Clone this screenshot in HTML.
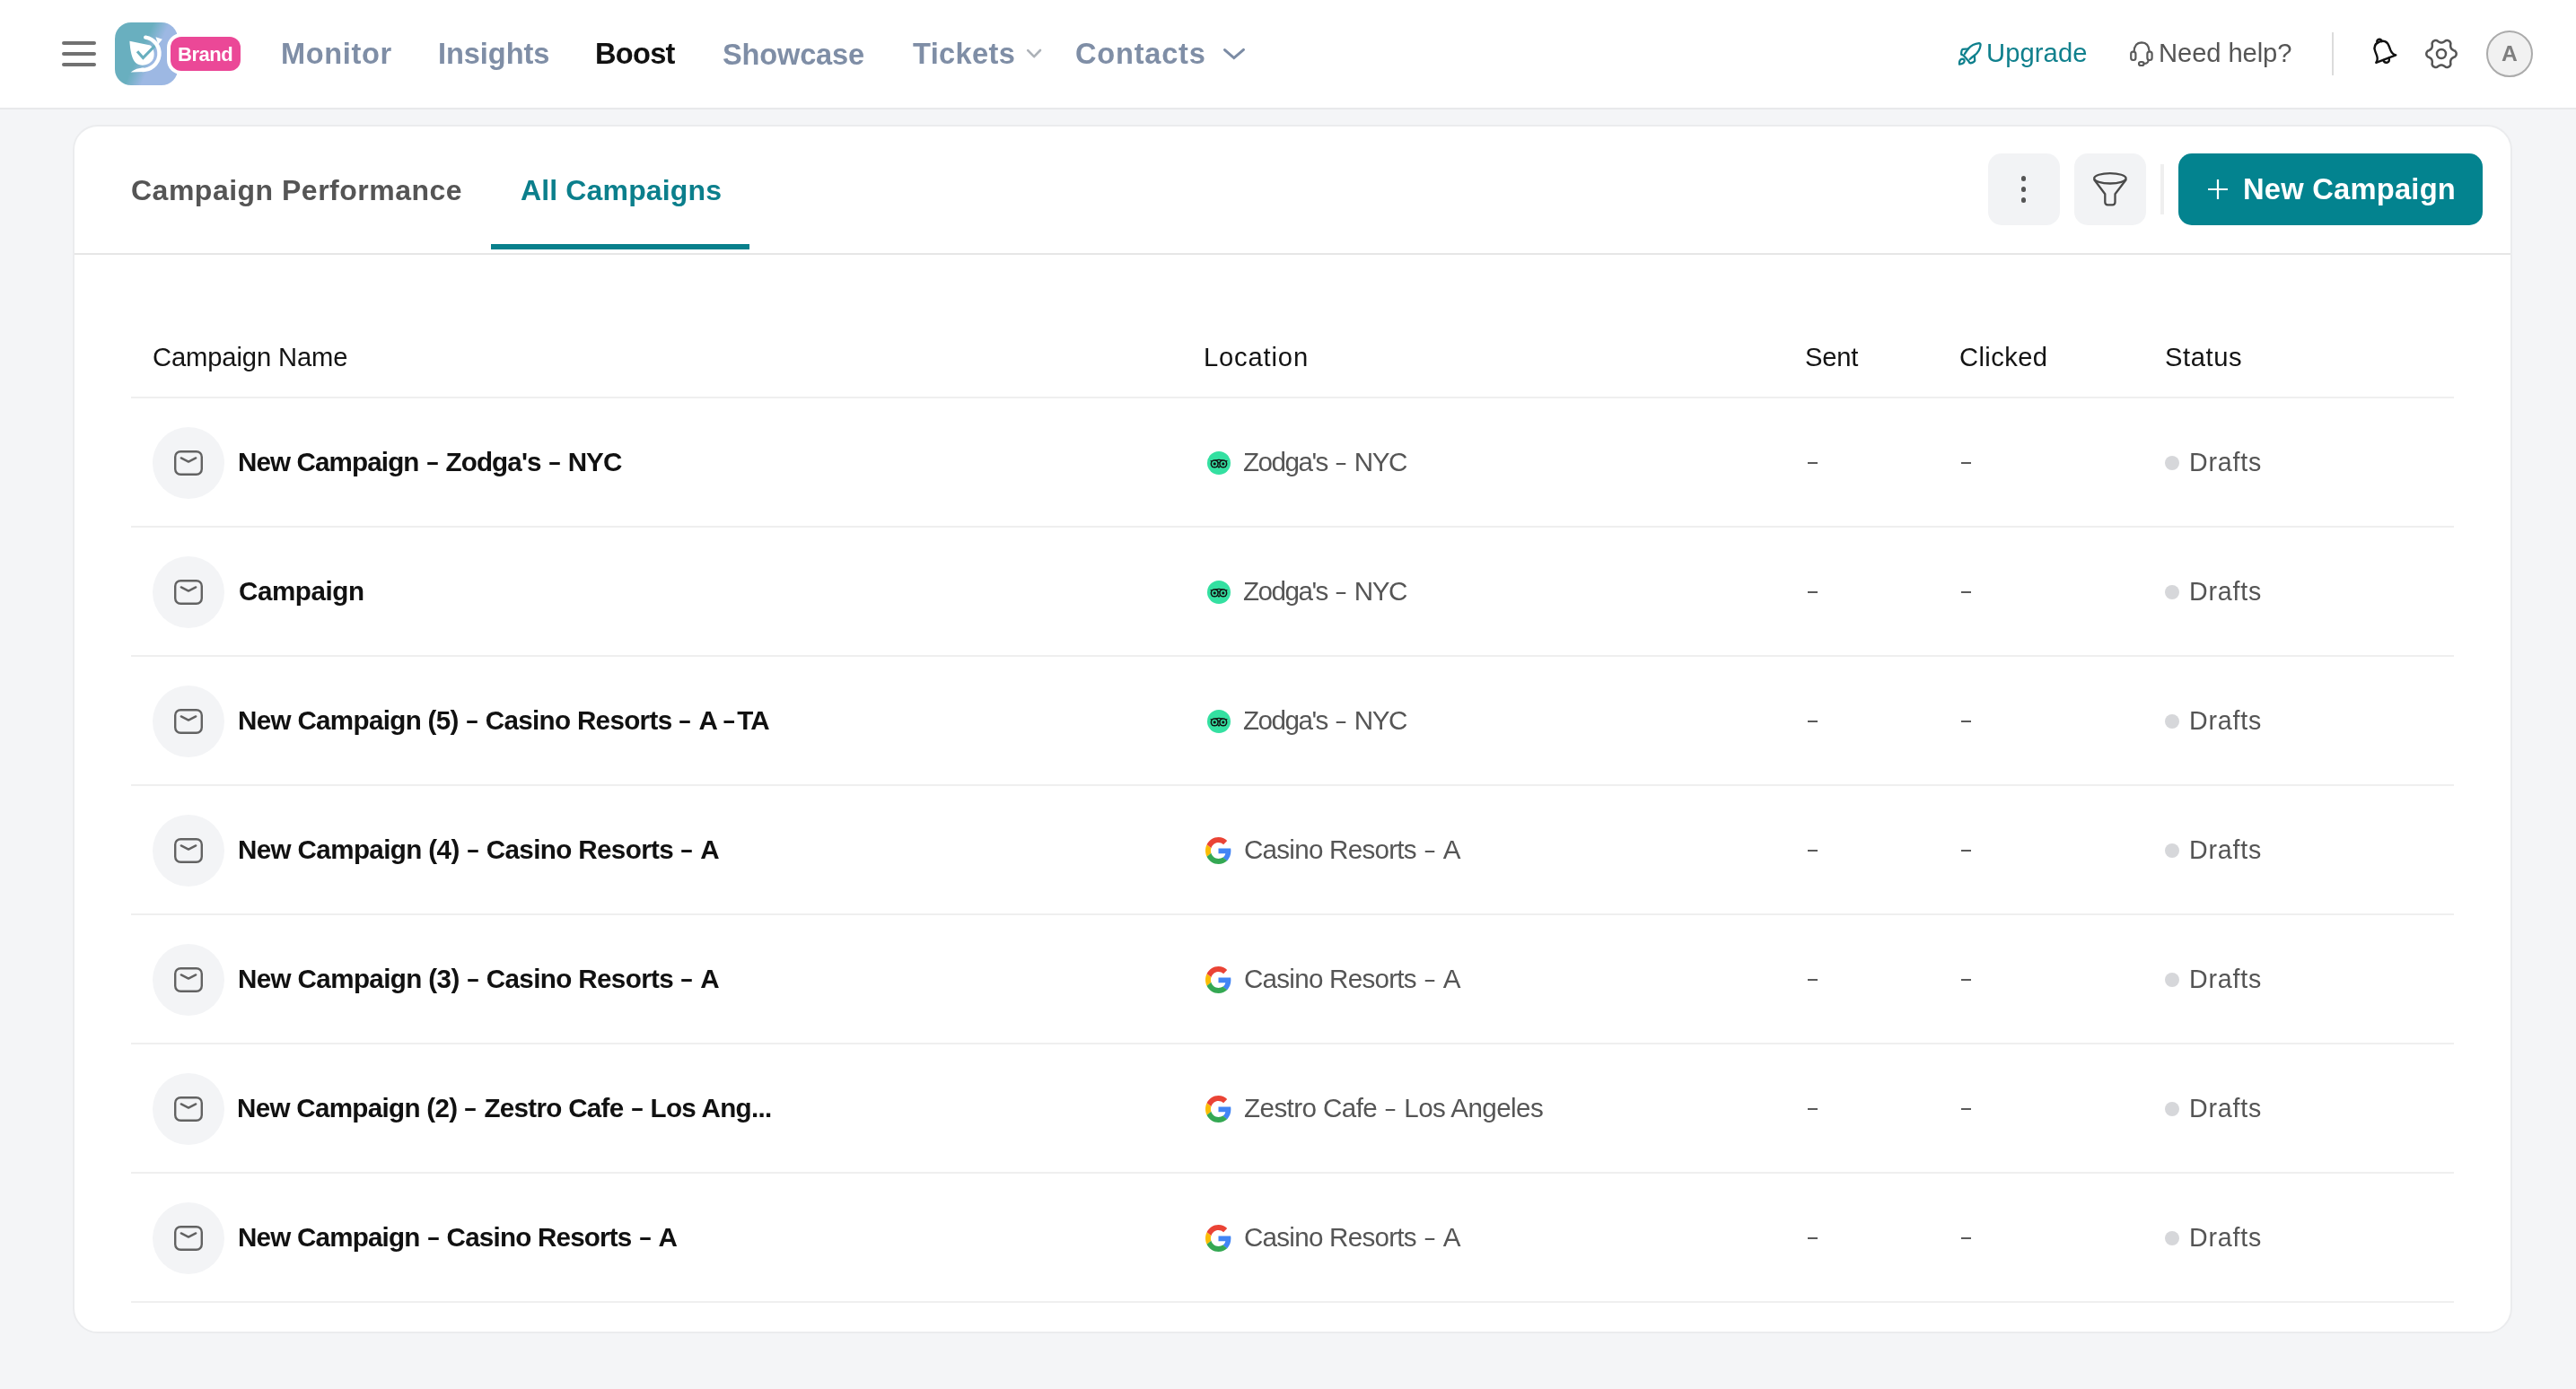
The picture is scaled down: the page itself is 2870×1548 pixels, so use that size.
<!DOCTYPE html>
<html><head><meta charset="utf-8"><title>All Campaigns</title>
<style>
*{box-sizing:border-box;margin:0;padding:0}
html,body{width:2870px;height:1548px;overflow:hidden}
body{background:#F4F5F7;font-family:"Liberation Sans",sans-serif;position:relative}
.a{position:absolute;white-space:nowrap;line-height:1}
.t{will-change:transform}
.bar{position:absolute;left:69px;width:38px;height:4px;border-radius:2px;background:#717171}
.hl{position:absolute;left:146px;width:2588px;height:2px;background:#EFEFEF}
.circ{position:absolute;left:170px;width:80px;height:80px;border-radius:40px;background:#F3F4F6}
.dash{position:absolute;width:11px;height:2px;background:#5A5A5A}
.db,.dr,.db1{display:inline-block;letter-spacing:0;text-align:center}
.db{width:30px;transform:scaleX(.79)}
.db1{width:22px;transform:scaleX(.79);text-align:right}
.dr{width:30px;transform:scaleX(.64)}
.dot{position:absolute;left:2412px;width:16px;height:16px;border-radius:8px;background:#D6D7DA}
</style></head>
<body>
<div class="a" style="left:0;top:0;width:2870px;height:122px;background:#fff;border-bottom:2px solid #E8E9EB"></div>
<div class="bar" style="top:46px"></div>
<div class="bar" style="top:58px"></div>
<div class="bar" style="top:70px"></div>
<div class="a" style="left:128px;top:25px;width:70px;height:70px;border-radius:18px;background:linear-gradient(115deg,#69AFBF 0%,#69AFBF 42%,#9DB8E3 60%,#9DB8E3 100%)"></div>
<svg class="a" style="left:136px;top:32px" width="56" height="56" viewBox="0 0 56 56"><path d="M8.4 13.7L31.5 18.4C35.8 22 37.2 30 33.6 35.6C30 40.8 20.5 42.6 15.2 38C10.8 33.8 9 24 8.4 13.7Z" fill="#fff"/><path d="M17 25.3L23.4 32.5L37.6 18" fill="none" stroke="#69AFBF" stroke-width="3.2"/><path d="M26.2 9.6A18.3 18.3 0 0 1 21.8 45.9" fill="none" stroke="#fff" stroke-width="4.4" stroke-linecap="round"/><path d="M24 43.6Q15.5 43.8 9.6 48.6Q16 48.3 24 48.1Z" fill="#fff"/><path d="M37.5 9.2L44.8 11.7L40.3 17.6Z" fill="#fff"/></svg>
<div class="a" style="left:186px;top:36.5px;width:86px;height:46.5px;border-radius:16px;background:#fff"></div>
<div class="a" style="left:190px;top:40.5px;width:78px;height:38.5px;border-radius:12px;background:#EB4897"></div>
<div class="a t" id="brand" style="left:198.34px;top:50.08px;font-size:22px;font-weight:700;color:#fff;letter-spacing:-0.450px">Brand</div>
<div class="a t" id="monitor" style="left:313.00px;top:44.20px;font-size:32.6px;font-weight:700;color:#7F8EA6;letter-spacing:0.630px">Monitor</div>
<div class="a t" id="insights" style="left:487.78px;top:44.20px;font-size:32.6px;font-weight:700;color:#7F8EA6;letter-spacing:-0.077px">Insights</div>
<div class="a t" id="boost" style="left:663.05px;top:44.20px;font-size:32.6px;font-weight:700;color:#111;letter-spacing:-0.720px">Boost</div>
<div class="a t" id="showcase" style="left:805.34px;top:45.20px;font-size:32.6px;font-weight:700;color:#7F8EA6;letter-spacing:-0.180px">Showcase</div>
<div class="a t" id="tickets" style="left:1016.75px;top:44.20px;font-size:32.6px;font-weight:700;color:#7F8EA6;letter-spacing:0.375px">Tickets</div>
<div class="a t" id="contacts" style="left:1197.90px;top:44.20px;font-size:32.6px;font-weight:700;color:#7F8EA6;letter-spacing:0.771px">Contacts</div>
<svg class="a" style="left:1140px;top:50px" width="24" height="20" viewBox="0 0 24 20" fill="none" stroke="#ADB2B8" stroke-width="2.6" stroke-linecap="round" stroke-linejoin="round"><path d="M5.2 6.2L12.1 13.2L19 6"/></svg>
<svg class="a" style="left:1360px;top:50px" width="30" height="20" viewBox="0 0 30 20" fill="none" stroke="#7B8BA4" stroke-width="3" stroke-linecap="round" stroke-linejoin="miter"><path d="M4.5 5.6L14.8 14.6L25.5 5.4"/></svg>
<svg class="a" style="left:2175px;top:38px" width="40" height="40" viewBox="0 0 40 40" fill="none" stroke="#0F808D" stroke-width="2.3" stroke-linejoin="round" stroke-linecap="round"><path d="M12.6 23.8L10.2 22.6Q10 18 11.6 16.8L18 16.3Q22.5 11 30 10.2Q31.8 10.6 31.5 12.6Q30.8 19 24.8 23.8L25.2 29.6Q24.8 31.2 20.3 32.4Q19 32.2 18.6 30.6Z"/><path d="M13.9 22.2Q15.5 19.6 18 16.3"/><path d="M19.6 28Q22 25.6 24.8 23.8"/><path d="M8 33.6Q7.6 28.4 11.2 27.6Q13.8 27.8 13.6 30.2Q12.8 33.2 8 33.6Z"/></svg>
<div class="a t" id="upgrade" style="left:2213.00px;top:44.98px;font-size:29.2px;font-weight:400;color:#10808D;letter-spacing:0.090px">Upgrade</div>
<svg class="a" style="left:2365px;top:38px" width="40" height="40" viewBox="0 0 40 40" fill="none" stroke="#5A5A5A" stroke-width="2.2" stroke-linejoin="round" stroke-linecap="round"><path d="M12.6 19.5Q13 9.6 21 9.4Q29 9.6 29.6 19"/><rect x="9.2" y="19.6" width="5.2" height="9.4" rx="2.4"/><rect x="27.4" y="19.6" width="5.2" height="9.4" rx="2.4"/><path d="M28.6 29.2Q28.4 32.8 23.4 33"/><rect x="18" y="31" width="5.6" height="4" rx="2"/></svg>
<div class="a t" id="needhelp" style="left:2405.05px;top:44.98px;font-size:29.2px;font-weight:400;color:#555;letter-spacing:-0.090px">Need help?</div>
<div class="a" style="left:2598px;top:36px;width:2px;height:48px;background:#DCDCDC"></div>
<svg class="a" style="left:2635.5px;top:39px" width="38" height="40" viewBox="0 0 38 40" fill="none" stroke="#111" stroke-width="2.4" stroke-linejoin="round" stroke-linecap="round"><g transform="rotate(-21 19 18)"><path d="M7.2 27.2Q10.6 25 10.8 20V15Q10.8 7 19 6.8Q27.2 7 27.2 15V20Q27.4 25 30.8 27.2Z"/><path d="M16.3 7.4Q16.3 4 19 4Q21.7 4 21.7 7.4"/><path d="M15.6 27.4Q15.8 31.4 19 31.4Q22.2 31.4 22.4 27.4"/></g></svg>
<svg class="a" style="left:2700px;top:40px" width="40" height="40" viewBox="0 0 40 40" fill="none" stroke="#555" stroke-width="2.5" stroke-linejoin="round"><polygon points="36.70,20.00 36.53,21.16 36.03,22.25 35.18,23.23 33.62,23.91 32.50,24.55 31.68,25.20 31.07,25.88 30.63,26.64 30.35,27.52 30.19,28.55 30.19,29.84 30.39,31.54 29.96,32.75 29.27,33.74 28.35,34.46 27.26,34.89 26.06,35.01 24.80,34.76 23.43,33.75 22.31,33.11 21.34,32.72 20.44,32.52 19.56,32.52 18.66,32.72 17.69,33.11 16.57,33.75 15.20,34.76 13.94,35.01 12.74,34.89 11.65,34.46 10.73,33.74 10.04,32.75 9.61,31.54 9.81,29.84 9.81,28.55 9.65,27.52 9.37,26.64 8.93,25.88 8.32,25.20 7.50,24.55 6.38,23.91 4.82,23.23 3.97,22.25 3.47,21.16 3.30,20.00 3.47,18.84 3.97,17.75 4.82,16.77 6.38,16.09 7.50,15.45 8.32,14.80 8.93,14.12 9.37,13.36 9.65,12.48 9.81,11.45 9.81,10.16 9.61,8.46 10.04,7.25 10.73,6.26 11.65,5.54 12.74,5.11 13.94,4.99 15.20,5.24 16.57,6.25 17.69,6.89 18.66,7.28 19.56,7.48 20.44,7.48 21.34,7.28 22.31,6.89 23.43,6.25 24.80,5.24 26.06,4.99 27.26,5.11 28.35,5.54 29.27,6.26 29.96,7.25 30.39,8.46 30.19,10.16 30.19,11.45 30.35,12.48 30.63,13.36 31.07,14.12 31.68,14.80 32.50,15.45 33.62,16.09 35.18,16.77 36.03,17.75 36.53,18.84 36.70,20.00"/><circle cx="20" cy="20" r="5"/></svg>
<div class="a" style="left:2770px;top:34px;width:52px;height:52px;border-radius:26px;background:#F1F1F1;border:2px solid #ABABAB"></div>
<div class="a t" id="avatarA" style="left:2786.90px;top:48.19px;font-size:24.7px;font-weight:700;color:#7E7E7E;letter-spacing:-3.870px">A</div>
<div class="a" style="left:81px;top:139px;width:2718px;height:1347px;background:#fff;border:2px solid #EBECEE;border-radius:28px"></div>
<div class="a t" id="campperf" style="left:146.29px;top:195.91px;font-size:32px;font-weight:700;color:#555;letter-spacing:0.493px">Campaign Performance</div>
<div class="a t" id="allcamp" style="left:579.85px;top:195.91px;font-size:32px;font-weight:700;color:#0B7F8C;letter-spacing:0.143px">All Campaigns</div>
<div class="a" style="left:547px;top:272px;width:288px;height:6px;background:#08808C"></div>
<div class="a" style="left:83px;top:282px;width:2714px;height:2px;background:#E6E6E6"></div>
<div class="a" style="left:2215px;top:171px;width:80px;height:80px;border-radius:15px;background:#F2F3F5"></div>
<div class="a" style="left:2252px;top:196.4px;width:5.2px;height:5.2px;border-radius:3px;background:#555"></div>
<div class="a" style="left:2252px;top:208.4px;width:5.2px;height:5.2px;border-radius:3px;background:#555"></div>
<div class="a" style="left:2252px;top:220.4px;width:5.2px;height:5.2px;border-radius:3px;background:#555"></div>
<div class="a" style="left:2311px;top:171px;width:80px;height:80px;border-radius:15px;background:#F2F3F5"></div>
<svg class="a" style="left:2320px;top:180px" width="60" height="60" viewBox="0 0 60 60" fill="none" stroke="#4A4A4A" stroke-width="2.3" stroke-linejoin="round" stroke-linecap="round"><ellipse cx="30.9" cy="18.8" rx="17.7" ry="5.7"/><path d="M13.4 20.5L25.3 36.3V45.3Q25.3 48.3 28.3 48.3H33.5Q36.5 48.3 36.5 45.3V36.3L48.5 20.5"/></svg>
<div class="a" style="left:2407px;top:183px;width:4px;height:56px;background:#EFEFEF"></div>
<div class="a" style="left:2427px;top:171px;width:339px;height:80px;border-radius:15px;background:#03838F"></div>
<svg class="a" style="left:2458px;top:198px" width="26" height="26" viewBox="0 0 26 26" stroke="#fff" stroke-width="2.2"><path d="M13 2V24M2 13H24"/></svg>
<div class="a t" id="newcamp" style="left:2498.78px;top:195.42px;font-size:32.7px;font-weight:700;color:#fff;letter-spacing:0.229px">New Campaign</div>
<div class="a t" id="th_name" style="left:169.90px;top:383.68px;font-size:29.2px;font-weight:400;color:#141414;letter-spacing:-0.128px">Campaign Name</div>
<div class="a t" id="th_loc" style="left:1340.61px;top:383.68px;font-size:29.2px;font-weight:400;color:#141414;letter-spacing:0.823px">Location</div>
<div class="a t" id="th_sent" style="left:2011.34px;top:383.68px;font-size:29.2px;font-weight:400;color:#141414;letter-spacing:-0.240px">Sent</div>
<div class="a t" id="th_clicked" style="left:2182.68px;top:383.68px;font-size:29.2px;font-weight:400;color:#141414;letter-spacing:0.390px">Clicked</div>
<div class="a t" id="th_status" style="left:2411.73px;top:383.68px;font-size:29.2px;font-weight:400;color:#141414;letter-spacing:0.576px">Status</div>
<div class="hl" style="top:442px"></div>
<div class="circ" style="top:476px"></div>
<svg class="a" style="left:194px;top:502px" width="32" height="28" viewBox="0 0 32 28" fill="none" stroke="#626262" stroke-width="2.4" stroke-linecap="round" stroke-linejoin="round"><rect x="1.2" y="1.2" width="29.6" height="25.6" rx="6"/><path d="M7.8 8.4L16 12.6L24.2 8.4"/></svg>
<div class="a t" id="nm0" style="left:265.00px;top:500.34px;font-size:29.6px;font-weight:700;color:#111;letter-spacing:-0.883px">New Campaign<span class="db">–</span>Zodga's<span class="db">–</span>NYC</div>
<svg class="a" style="left:1345px;top:503px" width="26" height="26" viewBox="0 0 26 26"><circle cx="13" cy="13" r="13" fill="#34E0A1"/><path d="M3.2 10.3H7Q13 7 19 10.3H22.8L20.5 13.2H5.5Z" fill="#111"/><circle cx="8.2" cy="13.9" r="4.6" fill="#111"/><circle cx="17.8" cy="13.9" r="4.6" fill="#111"/><path d="M11 16.6L13 19L15 16.6Z" fill="#111"/><circle cx="8.2" cy="13.9" r="3.1" fill="#34E0A1"/><circle cx="17.8" cy="13.9" r="3.1" fill="#34E0A1"/><circle cx="8.2" cy="13.9" r="1.6" fill="#111"/><circle cx="17.8" cy="13.9" r="1.6" fill="#111"/><path d="M11.4 10.5Q13 9.7 14.6 10.5L13 12.3Z" fill="#34E0A1"/></svg>
<div class="a t" id="loc0" style="left:1385.29px;top:500.34px;font-size:29.6px;font-weight:400;color:#555;letter-spacing:-1.500px">Zodga's<span class="dr">–</span>NYC</div>
<div class="dash" style="left:2014px;top:515px"></div>
<div class="dash" style="left:2185px;top:515px"></div>
<div class="dot" style="top:508px"></div>
<div class="a t" id="st0" style="left:2439.22px;top:500.69px;font-size:28.6px;font-weight:400;color:#555;letter-spacing:0.810px">Drafts</div>
<div class="hl" style="top:586px"></div>
<div class="circ" style="top:620px"></div>
<svg class="a" style="left:194px;top:646px" width="32" height="28" viewBox="0 0 32 28" fill="none" stroke="#626262" stroke-width="2.4" stroke-linecap="round" stroke-linejoin="round"><rect x="1.2" y="1.2" width="29.6" height="25.6" rx="6"/><path d="M7.8 8.4L16 12.6L24.2 8.4"/></svg>
<div class="a t" id="nm1" style="left:265.68px;top:644.34px;font-size:29.6px;font-weight:700;color:#111;letter-spacing:-0.437px">Campaign</div>
<svg class="a" style="left:1345px;top:647px" width="26" height="26" viewBox="0 0 26 26"><circle cx="13" cy="13" r="13" fill="#34E0A1"/><path d="M3.2 10.3H7Q13 7 19 10.3H22.8L20.5 13.2H5.5Z" fill="#111"/><circle cx="8.2" cy="13.9" r="4.6" fill="#111"/><circle cx="17.8" cy="13.9" r="4.6" fill="#111"/><path d="M11 16.6L13 19L15 16.6Z" fill="#111"/><circle cx="8.2" cy="13.9" r="3.1" fill="#34E0A1"/><circle cx="17.8" cy="13.9" r="3.1" fill="#34E0A1"/><circle cx="8.2" cy="13.9" r="1.6" fill="#111"/><circle cx="17.8" cy="13.9" r="1.6" fill="#111"/><path d="M11.4 10.5Q13 9.7 14.6 10.5L13 12.3Z" fill="#34E0A1"/></svg>
<div class="a t" id="loc1" style="left:1385.29px;top:644.34px;font-size:29.6px;font-weight:400;color:#555;letter-spacing:-1.500px">Zodga's<span class="dr">–</span>NYC</div>
<div class="dash" style="left:2014px;top:659px"></div>
<div class="dash" style="left:2185px;top:659px"></div>
<div class="dot" style="top:652px"></div>
<div class="a t" id="st1" style="left:2439.22px;top:644.69px;font-size:28.6px;font-weight:400;color:#555;letter-spacing:0.810px">Drafts</div>
<div class="hl" style="top:730px"></div>
<div class="circ" style="top:764px"></div>
<svg class="a" style="left:194px;top:790px" width="32" height="28" viewBox="0 0 32 28" fill="none" stroke="#626262" stroke-width="2.4" stroke-linecap="round" stroke-linejoin="round"><rect x="1.2" y="1.2" width="29.6" height="25.6" rx="6"/><path d="M7.8 8.4L16 12.6L24.2 8.4"/></svg>
<div class="a t" id="nm2" style="left:264.78px;top:788.34px;font-size:29.6px;font-weight:700;color:#111;letter-spacing:-0.673px">New Campaign (5)<span class="db">–</span>Casino Resorts<span class="db">–</span>A<span class="db1">–</span>TA</div>
<svg class="a" style="left:1345px;top:791px" width="26" height="26" viewBox="0 0 26 26"><circle cx="13" cy="13" r="13" fill="#34E0A1"/><path d="M3.2 10.3H7Q13 7 19 10.3H22.8L20.5 13.2H5.5Z" fill="#111"/><circle cx="8.2" cy="13.9" r="4.6" fill="#111"/><circle cx="17.8" cy="13.9" r="4.6" fill="#111"/><path d="M11 16.6L13 19L15 16.6Z" fill="#111"/><circle cx="8.2" cy="13.9" r="3.1" fill="#34E0A1"/><circle cx="17.8" cy="13.9" r="3.1" fill="#34E0A1"/><circle cx="8.2" cy="13.9" r="1.6" fill="#111"/><circle cx="17.8" cy="13.9" r="1.6" fill="#111"/><path d="M11.4 10.5Q13 9.7 14.6 10.5L13 12.3Z" fill="#34E0A1"/></svg>
<div class="a t" id="loc2" style="left:1385.29px;top:788.34px;font-size:29.6px;font-weight:400;color:#555;letter-spacing:-1.500px">Zodga's<span class="dr">–</span>NYC</div>
<div class="dash" style="left:2014px;top:803px"></div>
<div class="dash" style="left:2185px;top:803px"></div>
<div class="dot" style="top:796px"></div>
<div class="a t" id="st2" style="left:2439.22px;top:788.69px;font-size:28.6px;font-weight:400;color:#555;letter-spacing:0.810px">Drafts</div>
<div class="hl" style="top:874px"></div>
<div class="circ" style="top:908px"></div>
<svg class="a" style="left:194px;top:934px" width="32" height="28" viewBox="0 0 32 28" fill="none" stroke="#626262" stroke-width="2.4" stroke-linecap="round" stroke-linejoin="round"><rect x="1.2" y="1.2" width="29.6" height="25.6" rx="6"/><path d="M7.8 8.4L16 12.6L24.2 8.4"/></svg>
<div class="a t" id="nm3" style="left:264.78px;top:932.34px;font-size:29.6px;font-weight:700;color:#111;letter-spacing:-0.615px">New Campaign (4)<span class="db">–</span>Casino Resorts<span class="db">–</span>A</div>
<svg class="a" style="left:1343px;top:933px" width="29" height="30" viewBox="0 0 48 48" preserveAspectRatio="none"><path fill="#EA4335" d="M24 9.5c3.54 0 6.71 1.22 9.21 3.6l6.85-6.85C35.9 2.38 30.47 0 24 0 14.62 0 6.51 5.38 2.56 13.22l7.98 6.19C12.43 13.72 17.74 9.5 24 9.5z"/><path fill="#4285F4" d="M46.98 24.55c0-1.57-.15-3.09-.38-4.55H24v9.02h12.94c-.58 2.96-2.26 5.480-4.78 7.18l7.73 6c4.51-4.18 7.09-10.36 7.09-17.65z"/><path fill="#FBBC05" d="M10.53 28.59c-.48-1.45-.76-2.99-.76-4.59s.27-3.14.76-4.59l-7.98-6.19C.92 16.46 0 20.12 0 24c0 3.88.92 7.54 2.56 10.78l7.97-6.19z"/><path fill="#34A853" d="M24 48c6.48 0 11.93-2.13 15.89-5.81l-7.73-6c-2.15 1.45-4.92 2.3-8.16 2.3-6.26 0-11.57-4.22-13.47-9.91l-7.98 6.19C6.51 42.62 14.62 48 24 48z"/></svg>
<div class="a t" id="loc3" style="left:1385.85px;top:932.34px;font-size:29.6px;font-weight:400;color:#555;letter-spacing:-0.752px">Casino Resorts<span class="dr">–</span>A</div>
<div class="dash" style="left:2014px;top:947px"></div>
<div class="dash" style="left:2185px;top:947px"></div>
<div class="dot" style="top:940px"></div>
<div class="a t" id="st3" style="left:2439.22px;top:932.69px;font-size:28.6px;font-weight:400;color:#555;letter-spacing:0.810px">Drafts</div>
<div class="hl" style="top:1018px"></div>
<div class="circ" style="top:1052px"></div>
<svg class="a" style="left:194px;top:1078px" width="32" height="28" viewBox="0 0 32 28" fill="none" stroke="#626262" stroke-width="2.4" stroke-linecap="round" stroke-linejoin="round"><rect x="1.2" y="1.2" width="29.6" height="25.6" rx="6"/><path d="M7.8 8.4L16 12.6L24.2 8.4"/></svg>
<div class="a t" id="nm4" style="left:264.78px;top:1076.34px;font-size:29.6px;font-weight:700;color:#111;letter-spacing:-0.615px">New Campaign (3)<span class="db">–</span>Casino Resorts<span class="db">–</span>A</div>
<svg class="a" style="left:1343px;top:1077px" width="29" height="30" viewBox="0 0 48 48" preserveAspectRatio="none"><path fill="#EA4335" d="M24 9.5c3.54 0 6.71 1.22 9.21 3.6l6.85-6.85C35.9 2.38 30.47 0 24 0 14.62 0 6.51 5.38 2.56 13.22l7.98 6.19C12.43 13.72 17.74 9.5 24 9.5z"/><path fill="#4285F4" d="M46.98 24.55c0-1.57-.15-3.09-.38-4.55H24v9.02h12.94c-.58 2.96-2.26 5.480-4.78 7.18l7.73 6c4.51-4.18 7.09-10.36 7.09-17.65z"/><path fill="#FBBC05" d="M10.53 28.59c-.48-1.45-.76-2.99-.76-4.59s.27-3.14.76-4.59l-7.98-6.19C.92 16.46 0 20.12 0 24c0 3.88.92 7.54 2.56 10.78l7.97-6.19z"/><path fill="#34A853" d="M24 48c6.48 0 11.93-2.13 15.89-5.81l-7.73-6c-2.15 1.45-4.92 2.3-8.16 2.3-6.26 0-11.57-4.22-13.47-9.91l-7.98 6.19C6.51 42.62 14.62 48 24 48z"/></svg>
<div class="a t" id="loc4" style="left:1385.85px;top:1076.34px;font-size:29.6px;font-weight:400;color:#555;letter-spacing:-0.752px">Casino Resorts<span class="dr">–</span>A</div>
<div class="dash" style="left:2014px;top:1091px"></div>
<div class="dash" style="left:2185px;top:1091px"></div>
<div class="dot" style="top:1084px"></div>
<div class="a t" id="st4" style="left:2439.22px;top:1076.69px;font-size:28.6px;font-weight:400;color:#555;letter-spacing:0.810px">Drafts</div>
<div class="hl" style="top:1162px"></div>
<div class="circ" style="top:1196px"></div>
<svg class="a" style="left:194px;top:1222px" width="32" height="28" viewBox="0 0 32 28" fill="none" stroke="#626262" stroke-width="2.4" stroke-linecap="round" stroke-linejoin="round"><rect x="1.2" y="1.2" width="29.6" height="25.6" rx="6"/><path d="M7.8 8.4L16 12.6L24.2 8.4"/></svg>
<div class="a t" id="nm5" style="left:264.22px;top:1220.34px;font-size:29.6px;font-weight:700;color:#111;letter-spacing:-0.696px">New Campaign (2)<span class="db">–</span>Zestro Cafe<span class="db">–</span>Los Ang...</div>
<svg class="a" style="left:1343px;top:1221px" width="29" height="30" viewBox="0 0 48 48" preserveAspectRatio="none"><path fill="#EA4335" d="M24 9.5c3.54 0 6.71 1.22 9.21 3.6l6.85-6.85C35.9 2.38 30.47 0 24 0 14.62 0 6.51 5.38 2.56 13.22l7.98 6.19C12.43 13.72 17.74 9.5 24 9.5z"/><path fill="#4285F4" d="M46.98 24.55c0-1.57-.15-3.09-.38-4.55H24v9.02h12.94c-.58 2.96-2.26 5.480-4.78 7.18l7.73 6c4.51-4.18 7.09-10.36 7.09-17.65z"/><path fill="#FBBC05" d="M10.53 28.59c-.48-1.45-.76-2.99-.76-4.59s.27-3.14.76-4.59l-7.98-6.19C.92 16.46 0 20.12 0 24c0 3.88.92 7.54 2.56 10.78l7.97-6.19z"/><path fill="#34A853" d="M24 48c6.48 0 11.93-2.13 15.89-5.81l-7.73-6c-2.15 1.45-4.92 2.3-8.16 2.3-6.26 0-11.57-4.22-13.47-9.91l-7.98 6.19C6.51 42.62 14.62 48 24 48z"/></svg>
<div class="a t" id="loc5" style="left:1385.85px;top:1220.34px;font-size:29.6px;font-weight:400;color:#555;letter-spacing:-0.578px">Zestro Cafe<span class="dr">–</span>Los Angeles</div>
<div class="dash" style="left:2014px;top:1235px"></div>
<div class="dash" style="left:2185px;top:1235px"></div>
<div class="dot" style="top:1228px"></div>
<div class="a t" id="st5" style="left:2439.22px;top:1220.69px;font-size:28.6px;font-weight:400;color:#555;letter-spacing:0.810px">Drafts</div>
<div class="hl" style="top:1306px"></div>
<div class="circ" style="top:1340px"></div>
<svg class="a" style="left:194px;top:1366px" width="32" height="28" viewBox="0 0 32 28" fill="none" stroke="#626262" stroke-width="2.4" stroke-linecap="round" stroke-linejoin="round"><rect x="1.2" y="1.2" width="29.6" height="25.6" rx="6"/><path d="M7.8 8.4L16 12.6L24.2 8.4"/></svg>
<div class="a t" id="nm6" style="left:265.00px;top:1364.34px;font-size:29.6px;font-weight:700;color:#111;letter-spacing:-0.796px">New Campaign<span class="db">–</span>Casino Resorts<span class="db">–</span>A</div>
<svg class="a" style="left:1343px;top:1365px" width="29" height="30" viewBox="0 0 48 48" preserveAspectRatio="none"><path fill="#EA4335" d="M24 9.5c3.54 0 6.71 1.22 9.21 3.6l6.85-6.85C35.9 2.38 30.47 0 24 0 14.62 0 6.51 5.38 2.56 13.22l7.98 6.19C12.43 13.72 17.74 9.5 24 9.5z"/><path fill="#4285F4" d="M46.98 24.55c0-1.57-.15-3.09-.38-4.55H24v9.02h12.94c-.58 2.96-2.26 5.480-4.78 7.18l7.73 6c4.51-4.18 7.09-10.36 7.09-17.65z"/><path fill="#FBBC05" d="M10.53 28.59c-.48-1.45-.76-2.99-.76-4.59s.27-3.14.76-4.59l-7.98-6.19C.92 16.46 0 20.12 0 24c0 3.88.92 7.54 2.56 10.78l7.97-6.19z"/><path fill="#34A853" d="M24 48c6.48 0 11.93-2.13 15.89-5.81l-7.73-6c-2.15 1.45-4.92 2.3-8.16 2.3-6.26 0-11.57-4.22-13.47-9.91l-7.98 6.19C6.51 42.62 14.62 48 24 48z"/></svg>
<div class="a t" id="loc6" style="left:1385.85px;top:1364.34px;font-size:29.6px;font-weight:400;color:#555;letter-spacing:-0.752px">Casino Resorts<span class="dr">–</span>A</div>
<div class="dash" style="left:2014px;top:1379px"></div>
<div class="dash" style="left:2185px;top:1379px"></div>
<div class="dot" style="top:1372px"></div>
<div class="a t" id="st6" style="left:2439.22px;top:1364.69px;font-size:28.6px;font-weight:400;color:#555;letter-spacing:0.810px">Drafts</div>
<div class="hl" style="top:1450px"></div>
</body></html>
